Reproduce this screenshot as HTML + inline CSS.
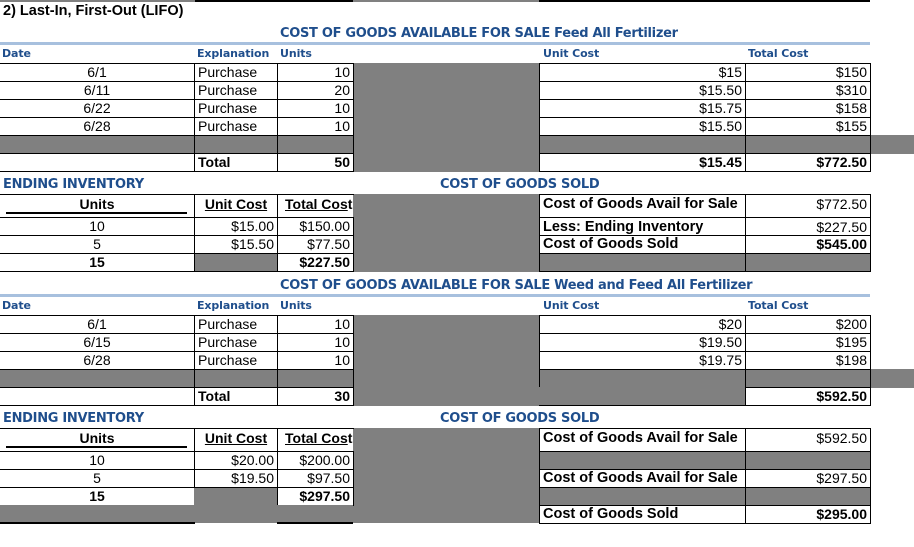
<!DOCTYPE html>
<html><head><meta charset="utf-8"><style>
body{margin:0;width:914px;height:547px;background:#fff;position:relative;overflow:hidden;font-family:"Liberation Sans",Arial,sans-serif;}
div{position:absolute;box-sizing:border-box;}
.b{border:1px solid #000;font-size:14px;padding:0 3px;white-space:nowrap;overflow:visible;}
.nl{border-left:none;}
.r{text-align:right;}
.c{text-align:center;}
.bo{font-weight:bold;}
.g{background:#808080;}
.h{color:#1f4e8c;font-weight:bold;font-family:"DejaVu Sans","Liberation Sans",sans-serif;font-size:13px;letter-spacing:-0.3px;white-space:nowrap;}
.s{color:#1f4e8c;font-weight:bold;font-family:"DejaVu Sans","Liberation Sans",sans-serif;font-size:11px;letter-spacing:-0.1px;white-space:nowrap;}
.lab{font-size:14.5px;font-weight:bold;}
</style></head><body>
<div style="left:0;top:0;width:195px;height:2px;background:#808080"></div>
<div style="left:195px;top:0;width:675px;height:2px;background:#000"></div>
<div style="left:353px;top:0;width:186px;height:2px;background:#808080"></div>
<div style="left:3px;top:3px;font-size:14.5px;font-weight:bold;">2) Last-In, First-Out (LIFO)</div>

<div class="h" style="left:280px;top:26px;">COST OF GOODS AVAILABLE FOR SALE Feed All Fertilizer</div>
<div style="left:0;top:42px;width:870px;height:3px;background:#a7c0de"></div>
<div class="s" style="left:2px;top:47px;">Date</div>
<div class="s" style="left:197px;top:47px;">Explanation</div>
<div class="s" style="left:280px;top:47px;">Units</div>
<div class="s" style="left:543px;top:47px;">Unit Cost</div>
<div class="s" style="left:748px;top:47px;">Total Cost</div>

<div class="g" style="left:353px;top:63px;width:186px;height:109px"></div>
<div class="g" style="left:870px;top:135px;width:44px;height:19px"></div>

<div class="b nl c" style="left:0;top:63px;width:195px;height:19px;line-height:17px">6/1</div>
<div class="b" style="left:194px;top:63px;width:84px;height:19px;line-height:17px">Purchase</div>
<div class="b r" style="left:277px;top:63px;width:77px;height:19px;line-height:17px">10</div>
<div class="b r" style="left:539px;top:63px;width:207px;height:19px;line-height:17px">$15</div>
<div class="b r" style="left:745px;top:63px;width:126px;height:19px;line-height:17px">$150</div>

<div class="b nl c" style="left:0;top:81px;width:195px;height:19px;line-height:17px">6/11</div>
<div class="b" style="left:194px;top:81px;width:84px;height:19px;line-height:17px">Purchase</div>
<div class="b r" style="left:277px;top:81px;width:77px;height:19px;line-height:17px">20</div>
<div class="b r" style="left:539px;top:81px;width:207px;height:19px;line-height:17px">$15.50</div>
<div class="b r" style="left:745px;top:81px;width:126px;height:19px;line-height:17px">$310</div>

<div class="b nl c" style="left:0;top:99px;width:195px;height:19px;line-height:17px">6/22</div>
<div class="b" style="left:194px;top:99px;width:84px;height:19px;line-height:17px">Purchase</div>
<div class="b r" style="left:277px;top:99px;width:77px;height:19px;line-height:17px">10</div>
<div class="b r" style="left:539px;top:99px;width:207px;height:19px;line-height:17px">$15.75</div>
<div class="b r" style="left:745px;top:99px;width:126px;height:19px;line-height:17px">$158</div>

<div class="b nl c" style="left:0;top:117px;width:195px;height:19px;line-height:17px">6/28</div>
<div class="b" style="left:194px;top:117px;width:84px;height:19px;line-height:17px">Purchase</div>
<div class="b r" style="left:277px;top:117px;width:77px;height:19px;line-height:17px">10</div>
<div class="b r" style="left:539px;top:117px;width:207px;height:19px;line-height:17px">$15.50</div>
<div class="b r" style="left:745px;top:117px;width:126px;height:19px;line-height:17px">$155</div>

<div class="b nl g" style="left:0;top:135px;width:195px;height:19px"></div>
<div class="b g" style="left:194px;top:135px;width:84px;height:19px"></div>
<div class="b g" style="left:277px;top:135px;width:77px;height:19px"></div>
<div class="b g" style="left:539px;top:135px;width:207px;height:19px"></div>
<div class="b g" style="left:745px;top:135px;width:126px;height:19px"></div>

<div class="b nl" style="left:0;top:153px;width:195px;height:19px"></div>
<div class="b bo" style="left:194px;top:153px;width:84px;height:19px;line-height:17px">Total</div>
<div class="b r bo" style="left:277px;top:153px;width:77px;height:19px;line-height:17px">50</div>
<div class="b r bo" style="left:539px;top:153px;width:207px;height:19px;line-height:17px">$15.45</div>
<div class="b r bo" style="left:745px;top:153px;width:126px;height:19px;line-height:17px">$772.50</div>

<div class="h" style="left:3px;top:177px;">ENDING INVENTORY</div>
<div class="h" style="left:440px;top:177px;">COST OF GOODS SOLD</div>

<div class="g" style="left:353px;top:194px;width:186px;height:78px"></div>
<div class="b nl c bo" style="left:0;top:194px;width:195px;height:24px;line-height:18px">Units</div>
<div style="left:6px;top:212px;width:181px;height:2px;background:#000"></div>
<div class="b c bo" style="left:194px;top:194px;width:84px;height:24px;line-height:18px;text-decoration:underline">Unit Cost</div>
<div class="b bo" style="left:277px;top:194px;width:77px;height:24px;line-height:18px;padding-left:7px;border-right:none"><span style="text-decoration:underline">Total Cos</span>t</div>
<div class="b nl c" style="left:0;top:217px;width:195px;height:19px;line-height:17px">10</div>
<div class="b r" style="left:194px;top:217px;width:84px;height:19px;line-height:17px">$15.00</div>
<div class="b r" style="left:277px;top:217px;width:77px;height:19px;line-height:17px">$150.00</div>
<div class="b nl c" style="left:0;top:235px;width:195px;height:19px;line-height:17px">5</div>
<div class="b r" style="left:194px;top:235px;width:84px;height:19px;line-height:17px">$15.50</div>
<div class="b r" style="left:277px;top:235px;width:77px;height:19px;line-height:17px">$77.50</div>
<div class="b nl c bo" style="left:0;top:253px;width:195px;height:19px;line-height:17px">15</div>
<div class="b g" style="left:194px;top:253px;width:84px;height:19px"></div>
<div class="b r bo" style="left:277px;top:253px;width:77px;height:19px;line-height:17px">$227.50</div>

<div class="b lab" style="left:539px;top:194px;width:207px;height:24px;line-height:18px">Cost of Goods Avail for Sale</div>
<div class="b r" style="left:745px;top:194px;width:126px;height:24px;line-height:18px">$772.50</div>
<div class="b lab" style="left:539px;top:217px;width:207px;height:19px;line-height:19px">Less: Ending Inventory</div>
<div class="b r" style="left:745px;top:217px;width:126px;height:19px;line-height:19px">$227.50</div>
<div class="b lab" style="left:539px;top:235px;width:207px;height:19px;line-height:17px">Cost of Goods Sold</div>
<div class="b r bo" style="left:745px;top:235px;width:126px;height:19px;line-height:17px">$545.00</div>
<div class="b g" style="left:539px;top:253px;width:207px;height:19px"></div>
<div class="b g" style="left:745px;top:253px;width:126px;height:19px"></div>

<div class="h" style="left:280px;top:278px;">COST OF GOODS AVAILABLE FOR SALE Weed and Feed All Fertilizer</div>
<div style="left:0;top:294px;width:870px;height:3px;background:#a7c0de"></div>
<div class="s" style="left:2px;top:299px;">Date</div>
<div class="s" style="left:197px;top:299px;">Explanation</div>
<div class="s" style="left:280px;top:299px;">Units</div>
<div class="s" style="left:543px;top:299px;">Unit Cost</div>
<div class="s" style="left:748px;top:299px;">Total Cost</div>

<div class="g" style="left:353px;top:315px;width:186px;height:91px"></div>
<div class="g" style="left:870px;top:369px;width:44px;height:19px"></div>

<div class="b nl c" style="left:0;top:315px;width:195px;height:19px;line-height:17px">6/1</div>
<div class="b" style="left:194px;top:315px;width:84px;height:19px;line-height:17px">Purchase</div>
<div class="b r" style="left:277px;top:315px;width:77px;height:19px;line-height:17px">10</div>
<div class="b r" style="left:539px;top:315px;width:207px;height:19px;line-height:17px">$20</div>
<div class="b r" style="left:745px;top:315px;width:126px;height:19px;line-height:17px">$200</div>

<div class="b nl c" style="left:0;top:333px;width:195px;height:19px;line-height:17px">6/15</div>
<div class="b" style="left:194px;top:333px;width:84px;height:19px;line-height:17px">Purchase</div>
<div class="b r" style="left:277px;top:333px;width:77px;height:19px;line-height:17px">10</div>
<div class="b r" style="left:539px;top:333px;width:207px;height:19px;line-height:17px">$19.50</div>
<div class="b r" style="left:745px;top:333px;width:126px;height:19px;line-height:17px">$195</div>

<div class="b nl c" style="left:0;top:351px;width:195px;height:19px;line-height:17px">6/28</div>
<div class="b" style="left:194px;top:351px;width:84px;height:19px;line-height:17px">Purchase</div>
<div class="b r" style="left:277px;top:351px;width:77px;height:19px;line-height:17px">10</div>
<div class="b r" style="left:539px;top:351px;width:207px;height:19px;line-height:17px">$19.75</div>
<div class="b r" style="left:745px;top:351px;width:126px;height:19px;line-height:17px">$198</div>

<div class="b nl g" style="left:0;top:369px;width:195px;height:19px"></div>
<div class="b g" style="left:194px;top:369px;width:84px;height:19px"></div>
<div class="b g" style="left:277px;top:369px;width:77px;height:19px"></div>
<div class="b g" style="left:539px;top:369px;width:207px;height:19px"></div>
<div class="b g" style="left:745px;top:369px;width:126px;height:19px"></div>

<div class="b nl" style="left:0;top:387px;width:195px;height:19px"></div>
<div class="b bo" style="left:194px;top:387px;width:84px;height:19px;line-height:17px">Total</div>
<div class="b r bo" style="left:277px;top:387px;width:77px;height:19px;line-height:17px">30</div>
<div class="b g" style="left:539px;top:387px;width:207px;height:19px;border-left:none;border-top:none"></div>
<div class="b r bo" style="left:745px;top:387px;width:126px;height:19px;line-height:17px">$592.50</div>

<div class="h" style="left:3px;top:411px;">ENDING INVENTORY</div>
<div class="h" style="left:440px;top:411px;">COST OF GOODS SOLD</div>

<div class="g" style="left:353px;top:428px;width:186px;height:95px"></div>
<div class="b nl c bo" style="left:0;top:428px;width:195px;height:24px;line-height:18px">Units</div>
<div style="left:6px;top:446px;width:181px;height:2px;background:#000"></div>
<div class="b c bo" style="left:194px;top:428px;width:84px;height:24px;line-height:18px;text-decoration:underline">Unit Cost</div>
<div class="b bo" style="left:277px;top:428px;width:77px;height:24px;line-height:18px;padding-left:7px;border-right:none"><span style="text-decoration:underline">Total Cos</span>t</div>
<div class="b nl c" style="left:0;top:451px;width:195px;height:19px;line-height:17px">10</div>
<div class="b r" style="left:194px;top:451px;width:84px;height:19px;line-height:17px">$20.00</div>
<div class="b r" style="left:277px;top:451px;width:77px;height:19px;line-height:17px">$200.00</div>
<div class="b nl c" style="left:0;top:469px;width:195px;height:19px;line-height:17px">5</div>
<div class="b r" style="left:194px;top:469px;width:84px;height:19px;line-height:17px">$19.50</div>
<div class="b r" style="left:277px;top:469px;width:77px;height:19px;line-height:17px">$97.50</div>
<div class="b nl c bo" style="left:0;top:487px;width:195px;height:19px;line-height:17px">15</div>
<div class="b g" style="left:194px;top:487px;width:84px;height:19px;border-left:none;border-right:none"></div>
<div class="b r bo" style="left:277px;top:487px;width:77px;height:19px;line-height:17px">$297.50</div>
<div class="g" style="left:0;top:505px;width:353px;height:18px"></div>
<div style="left:0;top:522px;width:195px;height:2px;background:#000"></div>
<div style="left:277px;top:522px;width:76px;height:2px;background:#000"></div>

<div class="b lab" style="left:539px;top:428px;width:207px;height:24px;line-height:18px">Cost of Goods Avail for Sale</div>
<div class="b r" style="left:745px;top:428px;width:126px;height:24px;line-height:18px">$592.50</div>
<div class="b g" style="left:539px;top:451px;width:207px;height:19px"></div>
<div class="b g" style="left:745px;top:451px;width:126px;height:19px"></div>
<div class="b lab" style="left:539px;top:469px;width:207px;height:19px;line-height:17px">Cost of Goods Avail for Sale</div>
<div class="b r" style="left:745px;top:469px;width:126px;height:19px;line-height:17px">$297.50</div>
<div class="b g" style="left:539px;top:487px;width:207px;height:19px"></div>
<div class="b g" style="left:745px;top:487px;width:126px;height:19px"></div>
<div class="b lab" style="left:539px;top:505px;width:207px;height:19px;line-height:17px">Cost of Goods Sold</div>
<div class="b r bo" style="left:745px;top:505px;width:126px;height:19px;line-height:17px">$295.00</div>
</body></html>
